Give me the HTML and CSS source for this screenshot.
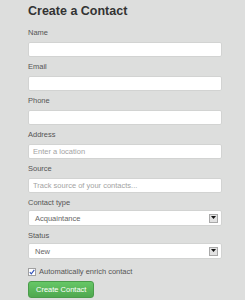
FILE: index.html
```html
<!DOCTYPE html>
<html lang="en">
<head>
    <meta charset="UTF-8">
    <title>Create a Contact</title>
    <link rel="stylesheet" href="styles.css">
</head>
<body>
    <form class="contact-form">
        <h2>Create a Contact</h2>

        <div class="field">
            <label for="name">Name</label>
            <input type="text" id="name">
        </div>

        <div class="field">
            <label for="email">Email</label>
            <input type="text" id="email">
        </div>

        <div class="field">
            <label for="phone">Phone</label>
            <input type="text" id="phone">
        </div>

        <div class="field">
            <label for="address">Address</label>
            <input type="text" id="address" placeholder="Enter a location">
        </div>

        <div class="field">
            <label for="source">Source</label>
            <input type="text" id="source" placeholder="Track source of your contacts...">
        </div>

        <div class="field select-field">
            <label>Contact type</label>
            <div class="select">
                <span>Acquaintance</span>
                <span class="select-arrow">
                    <svg width="5" height="4" viewBox="0 0 5 4"><path d="M0 0H5L2.5 3Z" fill="#111"/></svg>
                </span>
            </div>
        </div>

        <div class="field select-field">
            <label>Status</label>
            <div class="select">
                <span>New</span>
                <span class="select-arrow">
                    <svg width="5" height="4" viewBox="0 0 5 4"><path d="M0 0H5L2.5 3Z" fill="#111"/></svg>
                </span>
            </div>
        </div>

        <div class="check-row">
            <span class="checkbox">
                <svg width="6" height="6" viewBox="0 0 6 6"><path d="M0.8 3.2L2.3 4.8L5.3 0.8" fill="none" stroke="#2f4fb8" stroke-width="1.1"/></svg>
            </span>
            <span>Automatically enrich contact</span>
        </div>

        <button type="button" class="btn-success">Create Contact</button>
    </form>
</body>
</html>
```

FILE: styles.css
```css
body {
    margin: 0;
    background: #dddedd;
    font-family: "Liberation Sans", Arial, sans-serif;
    color: #555;
}
.contact-form {
    display: flex;
    flex-direction: column;
    width: 194px;
    padding: 4px 0 0 28px;
}
.contact-form h2 {
    margin: 0 0 9px 0;
    font-size: 12.5px;
    line-height: 15px;
    color: #333;
}
.field {
    display: flex;
    flex-direction: column;
    gap: 4px;
    margin-bottom: 5px;
}
.field label {
    font-size: 7.5px;
    line-height: 10px;
}
.field input {
    box-sizing: border-box;
    height: 15px;
    margin: 0;
    padding: 0 4px;
    border: 1px solid #d2d3d2;
    border-radius: 2px;
    background: #fff;
    font-family: "Liberation Sans", Arial, sans-serif;
    font-size: 7.5px;
    color: #555;
    outline: none;
}
.field input::placeholder {
    color: #a3a3a3;
}
.select-field {
    gap: 2px;
}
.select {
    box-sizing: border-box;
    height: 16px;
    display: flex;
    align-items: center;
    justify-content: space-between;
    padding: 0 3px 0 6px;
    border: 1px solid #d2d3d2;
    border-radius: 2px;
    background: #fff;
    font-size: 7.5px;
    color: #666;
}
.select-arrow {
    box-sizing: border-box;
    width: 9px;
    height: 9px;
    display: flex;
    align-items: center;
    justify-content: center;
    border: 1px solid #a9a9a9;
    background: #e2e2e2;
}
.check-row {
    display: flex;
    align-items: center;
    gap: 3px;
    margin-top: 2px;
    height: 11px;
    font-size: 7.5px;
    color: #555;
}
.checkbox {
    box-sizing: border-box;
    width: 8px;
    height: 8px;
    display: flex;
    align-items: center;
    justify-content: center;
    border: 1px solid #a0a0a0;
    background: #fff;
}
.btn-success {
    all: unset;
    align-self: flex-start;
    box-sizing: border-box;
    height: 17px;
    margin-top: 4px;
    padding: 0 7px;
    border: 1px solid #4a9c4a;
    border-radius: 3px;
    background: linear-gradient(#66c766, #4fa84f);
    color: #fff;
    font-size: 7.5px;
    line-height: 15px;
    cursor: pointer;
}
```
